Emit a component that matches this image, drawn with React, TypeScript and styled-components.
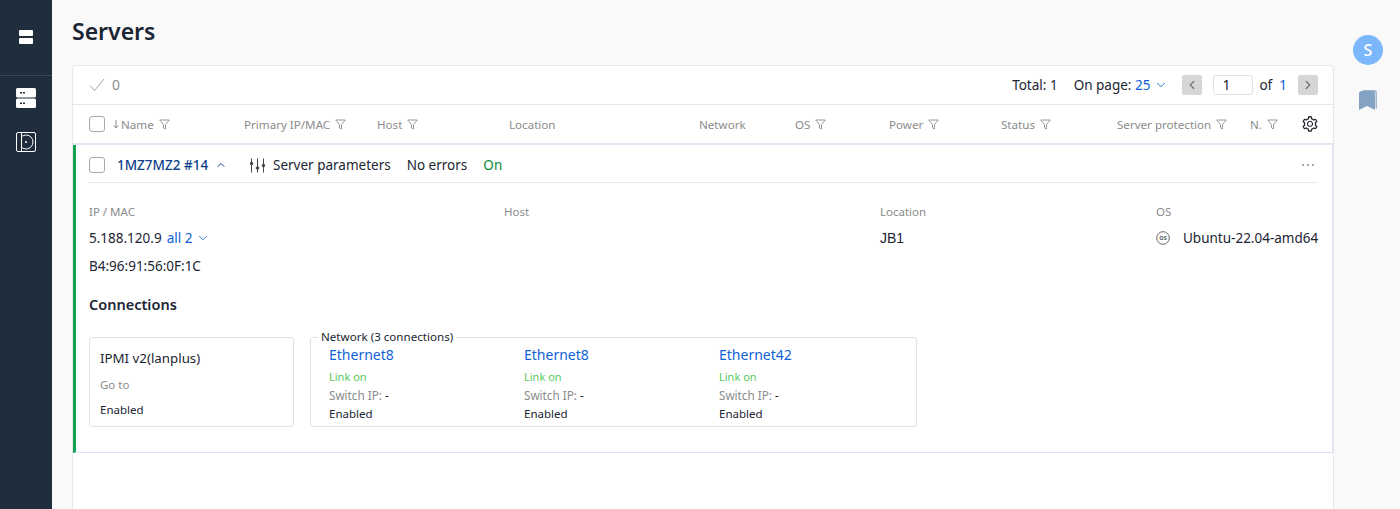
import React from 'react';
import styled, { createGlobalStyle } from 'styled-components';
import { ChevronDown, ChevronUp, ChevronLeft, ChevronRight } from 'lucide-react';
import { AiOutlineSetting } from 'react-icons/ai';

const Global = createGlobalStyle`
  html, body { margin: 0; padding: 0; height: 509px; overflow: hidden; background: #f9f9f9; }
  #root { height: 509px; }
  * { box-sizing: border-box; }
  body { font-family: "Noto Sans", "Open Sans", sans-serif; color: #1b2533; }
`;

const Page = styled.div`display: flex; width: 1400px; height: 509px; overflow: hidden;`;
const Sidebar = styled.nav`width: 52px; flex: none; background: #1f2d3d; display: flex; flex-direction: column; align-items: center;`;
const LogoSlot = styled.div`width: 100%; height: 76px; border-bottom: 1px solid #3a4756; display: flex; align-items: center; justify-content: center; padding-bottom: 1px;`;
const NavSlot = styled.div`height: 34px; margin-top: ${p => p.$top}px; display: flex; align-items: center; justify-content: center;`;
const Main = styled.main`flex: 1; min-width: 0; padding: 0 0 0 20px;`;
const Title = styled.h1`margin: 0; height: 65px; padding-top: 16px; font-size: 23px; line-height: 30px; font-weight: 600; color: #1b2533;`;
const Rail = styled.aside`width: 66px; flex: none; display: flex; flex-direction: column; align-items: center; padding: 35px 0 0 2px;`;
const Avatar = styled.div`width: 30px; height: 30px; border-radius: 50%; background: #7db7fb; color: #fff; font-size: 16px; font-weight: 500; display: flex; align-items: center; justify-content: center;`;
const RailIcon = styled.div`margin-top: 25px; height: 20px; display: flex;`;

const Card = styled.section`background: #fff; border: 1px solid #e8e8e8; border-bottom: 0; border-radius: 4px 4px 0 0; height: 460px;`;
const Toolbar = styled.div`height: 39px; border-bottom: 1px solid #e6e6e6; display: flex; align-items: center; padding: 0 15px 1px 16px;`;
const SelCount = styled.div`display: flex; align-items: center; gap: 7px; color: #8d8d8d; font-size: 14px;`;
const Pager = styled.div`margin-left: auto; display: flex; align-items: center; font-size: 13.5px; color: #1b2533;`;
const Blue = styled.span`color: #0f62d6; display: inline-flex;`;
const PagerText = styled.span`margin-left: ${p => p.$left || 0}px; display: flex; align-items: center; white-space: pre;`;
const PageBtn = styled.div`width: 20px; height: 20px; border-radius: 2px; background: #d6d6d6; color: #777; margin-left: ${p => p.$left || 0}px; display: flex; align-items: center; justify-content: center;`;
const PageInput = styled.div`width: 40px; height: 20px; margin-left: 11px; border: 1px solid #e2e2e2; border-radius: 3px; padding-left: 8px; font-size: 14px; line-height: 18px;`;

const Head = styled.div`height: 40px; display: grid; grid-template-columns: 155px 133px 132px 190px 96px 94px 112px 116px 133px 52px 1fr; align-items: center; padding-left: 16px; border-bottom: 2px solid #dfe6f2; font-size: 11.6px; color: #8b8b8b;`;
const HeadCell = styled.div`display: flex; align-items: center; gap: 5px; white-space: nowrap;`;
const SortArrow = styled.span`display: inline-flex; margin: 0 -3px 0 3px;`;
const Check = styled.span`width: 16px; height: 16px; border: 1px solid #a8a8a8; border-radius: 3px; background: #fff; flex: none;`;
const Gear = styled(AiOutlineSetting)`margin-left: -1px; color: #23282f;`;

const Row = styled.div`position: relative; height: 308px; border-left: 3px solid #12a150; border-right: 1px solid #dbe5f5; border-bottom: 1px solid #dbe5f5; padding: 0 15px 0 13px;`;
const RowHead = styled.div`height: 38px; padding-top: 3px; border-bottom: 1px solid #e6e6e6; display: flex; align-items: center; font-size: 13.5px; white-space: nowrap;`;
const ServerName = styled.span`margin-left: 12px; color: #0d3f8a; font-weight: 500; display: flex; align-items: center; gap: 7px; width: 133px;`;
const ParamLink = styled.span`display: flex; align-items: center; gap: 8px; margin-right: 16px;`;
const OnText = styled.span`margin-left: 16px; color: #0a8a3c;`;
const Dots = styled.span`margin-left: auto; display: flex; gap: 2px; padding-right: 3px;`;
const Dot = styled.i`width: 2px; height: 2px; border-radius: 50%; background: #8c8c8c; margin-left: 1px;`;

const Details = styled.div`display: grid; grid-template-columns: 415px 376px 276px 1fr; margin-top: 22px;`;
const Label = styled.div`font-size: 11.5px; line-height: 14px; color: #8b8b8b;`;
const Value = styled.div`font-size: 13.5px; line-height: 18px; margin-top: ${p => p.$top ?? 10}px; display: flex; align-items: center; white-space: nowrap;`;
const ArialValue = styled(Value)`font-family: "Liberation Sans", sans-serif; font-size: 14px;`;
const AllLink = styled.span`color: #0f62d6; margin-left: 5px; display: inline-flex; align-items: center; gap: 4px;`;
const OsName = styled.span`margin-left: 13px;`;
const SectionTitle = styled.h2`margin: 19px 0 0; font-size: 14.5px; line-height: 20px; font-weight: 600;`;

const Conns = styled.div`display: flex; gap: 16px; margin-top: 23px; align-items: flex-start;`;
const IpmiBox = styled.div`width: 205px; height: 90px; border: 1px solid #e2e2e2; border-radius: 3px; padding: 11px 10px;`;
const IpmiName = styled.div`font-size: 13.3px; line-height: 18px;`;
const GoTo = styled.div`font-size: 11.5px; line-height: 14px; color: #8b8b8b; margin-top: 11px;`;
const EnabledText = styled.div`font-size: 11.5px; line-height: 14px; margin-top: ${p => p.$top}px;`;
const NetBox = styled.fieldset`width: 607px; min-width: 0; min-inline-size: 0; height: 97px; margin: -7px 0 0; border: 1px solid #e2e2e2; border-radius: 3px; padding: 0 18px; display: grid; grid-template-columns: repeat(3, 195px);`;
const NetLegend = styled.legend`font-size: 11.6px; line-height: 14px; padding: 0 3px; margin-left: -11px; color: #1b2533;`;
const NetItem = styled.div`display: flex; flex-direction: column; margin-top: 2px;`;
const NetName = styled.div`font-size: 14px; line-height: 18px; color: #0f62d6;`;
const LinkOn = styled.div`font-size: 11px; line-height: 14px; color: #57c95f; margin-top: 6px;`;
const SwitchIp = styled.div`font-size: 11.7px; line-height: 14px; color: #8b8b8b; margin-top: 4px; span { color: #1b2533; }`;
const Plain = styled.div`font-size: 11.5px; line-height: 14px; margin-top: 5px;`;

const Funnel = () => (
  <svg width="11" height="11" viewBox="0 0 11 11" fill="none" stroke="#8f8f8f" strokeWidth="0.9"><path d="M0.7 1h9.6L6.5 5.6V10L4.5 8.8V5.6z" strokeLinejoin="round" /></svg>
);

const columns: [string, boolean][] = [
  ['Primary IP/MAC', true], ['Host', true], ['Location', false], ['Network', false], ['OS', true],
  ['Power', true], ['Status', true], ['Server protection', true], ['N.', true],
];

const nets = ['Ethernet8', 'Ethernet8', 'Ethernet42'];

export default function App() {
  return (
    <Page>
      <Global />
      <Sidebar>
        <LogoSlot>
          <svg width="14" height="14" viewBox="0 0 14 14" fill="#fff"><rect x="0" y="0" width="14" height="6" rx="1" /><rect x="0" y="8" width="14" height="6" rx="1" /></svg>
        </LogoSlot>
        <NavSlot $top={5}>
          <svg width="20" height="20" viewBox="0 0 20 20"><rect y="0" width="20" height="9.5" rx="1.5" fill="#fff" /><rect y="10.5" width="20" height="9.5" rx="1.5" fill="#fff" /><path d="M4 4.7h2M7 4.7h2M4 15.2h2M7 15.2h2" stroke="#1f2d3d" strokeWidth="1.4" /></svg>
        </NavSlot>
        <NavSlot $top={10}>
          <svg width="20" height="20" viewBox="0 0 20 20" fill="none" stroke="#fff" strokeWidth="1"><rect x="0.5" y="0.5" width="19" height="19" rx="1.5" /><path d="M5.5 1v18" /><path d="M5.5 4.64A7 7 0 1 1 5.5 15.36" /><circle cx="10" cy="10" r="1" fill="#fff" stroke="none" /></svg>
        </NavSlot>
      </Sidebar>
      <Main>
        <Title>Servers</Title>
        <Card>
          <Toolbar>
            <SelCount>
              <svg width="16" height="14" viewBox="0 0 16 14" fill="none" stroke="#a3a3a3" strokeWidth="1"><path d="M1 7.5l4.5 5L15 1" /></svg>
              0
            </SelCount>
            <Pager>
              <PagerText>Total: 1</PagerText>
              <PagerText $left={16}>On page: <Blue>25</Blue><Blue style={{ marginLeft: 4 }}><ChevronDown size={14} strokeWidth={1.5} /></Blue></PagerText>
              <PageBtn $left={14}><ChevronLeft size={14} strokeWidth={2.5} /></PageBtn>
              <PageInput>1</PageInput>
              <PagerText $left={6}>of  <Blue>1</Blue></PagerText>
              <PageBtn $left={11}><ChevronRight size={14} strokeWidth={2.5} /></PageBtn>
            </Pager>
          </Toolbar>
          <Head>
            <HeadCell>
              <Check />
              <SortArrow><svg width="6" height="9" viewBox="0 0 6 9" fill="none" stroke="#8b8b8b"><path d="M3 0v8M0.8 5.5L3 8l2.2-2.5" /></svg></SortArrow>
              Name <Funnel />
            </HeadCell>
            {columns.map(([name, filter]) => (
              <HeadCell key={name}>{name}{filter && <Funnel />}</HeadCell>
            ))}
            <Gear size={18} />
          </Head>
          <Row>
            <RowHead>
              <Check />
              <ServerName>1MZ7MZ2 #14<ChevronUp size={12} /></ServerName>
              <ParamLink>
                <svg width="15" height="15" viewBox="0 0 15 15" fill="none" stroke="#444" strokeWidth="1"><path d="M1.5 0.5v14M7.5 0.5v14M13.5 0.5v14" /><circle cx="1.5" cy="5.5" r="1.3" fill="#444" /><circle cx="7.5" cy="10" r="1.3" fill="#444" /><circle cx="13.5" cy="7.5" r="1.3" fill="#444" /></svg>
                Server parameters
              </ParamLink>
              No errors
              <OnText>On</OnText>
              <Dots><Dot /><Dot /><Dot /></Dots>
            </RowHead>
            <Details>
              <div>
                <Label>IP / MAC</Label>
                <Value>5.188.120.9<AllLink>all 2<ChevronDown size={14} strokeWidth={1.5} /></AllLink></Value>
                <Value $top={10}>B4:96:91:56:0F:1C</Value>
              </div>
              <div><Label>Host</Label></div>
              <div><Label>Location</Label><ArialValue>JB1</ArialValue></div>
              <div>
                <Label>OS</Label>
                <Value>
                  <svg width="14" height="14" viewBox="0 0 14 14" fill="none"><circle cx="7" cy="7" r="6.3" stroke="#666" /><text x="7" y="9" textAnchor="middle" fontSize="5.5" fontWeight="700" fill="#555" fontFamily="Noto Sans">OS</text></svg>
                  <OsName>Ubuntu-22.04-amd64</OsName>
                </Value>
              </div>
            </Details>
            <SectionTitle>Connections</SectionTitle>
            <Conns>
              <IpmiBox>
                <IpmiName>IPMI v2(lanplus)</IpmiName>
                <GoTo>Go to</GoTo>
                <EnabledText $top={11}>Enabled</EnabledText>
              </IpmiBox>
              <NetBox>
                <NetLegend>Network (3 connections)</NetLegend>
                {nets.map((n, i) => (
                  <NetItem key={i}>
                    <NetName>{n}</NetName>
                    <LinkOn>Link on</LinkOn>
                    <SwitchIp>Switch IP: <span>-</span></SwitchIp>
                    <Plain>Enabled</Plain>
                  </NetItem>
                ))}
              </NetBox>
            </Conns>
          </Row>
        </Card>
      </Main>
      <Rail>
        <Avatar>S</Avatar>
        <RailIcon>
          <svg width="18" height="20" viewBox="0 0 18 20"><path d="M4 0h11a3 3 0 0 1 3 3v16l-1.5-1V3a1.5 1.5 0 0 0-1.5-1H4z" fill="#9fb6cd" /><path d="M0 4a3 3 0 0 1 3-3h10a3 3 0 0 1 3 3v16l-8-4-8 4z" fill="#84a3c2" /></svg>
        </RailIcon>
      </Rail>
    </Page>
  );
}
